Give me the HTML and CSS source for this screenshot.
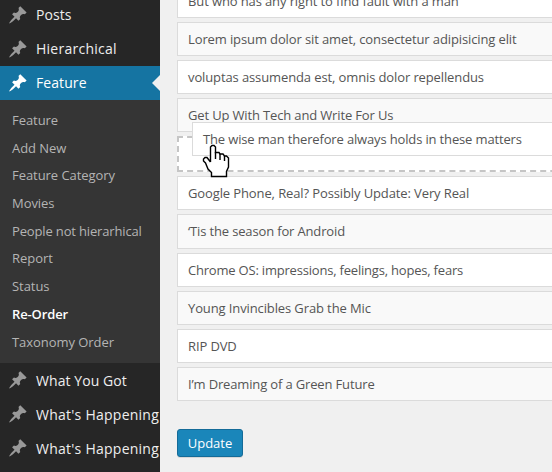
FILE: index.html
```html
<!DOCTYPE html>
<html lang="en">
<head>
<meta charset="utf-8">
<title>Re-Order</title>
<link rel="stylesheet" href="styles.css">
</head>
<body>
<svg class="defs" width="0" height="0">
  <symbol id="pin" viewBox="0 0 20 20"><path d="M10.44 3.02l1.82-1.82 6.36 6.35-1.83 1.82c-1.05-.68-2.48-.57-3.41.36l-.75.75c-.92.93-1.04 2.35-.35 3.41l-1.83 1.82-2.41-2.41-2.8 2.79c-.42.42-3.38 2.71-3.8 2.29s1.86-3.39 2.28-3.81l2.79-2.79L4.1 9.36l1.83-1.82c1.05.69 2.48.57 3.4-.36l.75-.75c.93-.92 1.05-2.35.36-3.41z"/></symbol>
</svg>
<div class="app">
  <nav class="menu">
    <a class="item"><svg class="icon"><use href="#pin"/></svg><span>Posts</span></a>
    <a class="item wide"><svg class="icon"><use href="#pin"/></svg><span>Hierarchical</span></a>
    <a class="item current"><svg class="icon"><use href="#pin"/></svg><span>Feature</span></a>
    <div class="submenu">
      <a>Feature</a>
      <a>Add New</a>
      <a>Feature Category</a>
      <a>Movies</a>
      <a class="snug">People not hierarhical</a>
      <a>Report</a>
      <a>Status</a>
      <a class="active">Re-Order</a>
      <a>Taxonomy Order</a>
    </div>
    <a class="item low"><svg class="icon"><use href="#pin"/></svg><span>What You Got</span></a>
    <a class="item low wide"><svg class="icon"><use href="#pin"/></svg><span>What's Happening</span></a>
    <a class="item low wide"><svg class="icon"><use href="#pin"/></svg><span>What's Happening</span></a>
  </nav>
  <main class="content">
    <div class="list">
      <div class="row">But who has any right to find fault with a man</div>
      <div class="row alt">Lorem ipsum dolor sit amet, consectetur adipisicing elit</div>
      <div class="row">voluptas assumenda est, omnis dolor repellendus</div>
      <div class="row alt snug">Get Up With Tech and Write For Us</div>
      <div class="slot">
        <div class="row dragged snug">The wise man therefore always holds in these matters</div>
        <svg class="cursor" width="28" height="34" viewBox="0 0 28 34">
          <path d="M8.500 18V3L10 1.500h2L13.500 3v5.500H17l1 1.500h3l1.500 2h2l2 2v9l-2 4.500v5H9.500v-4L6 25l-2.500-6L1.500 17v-2L3 13.500h2L8.500 18"/>
          <path d="M13.500 8v7M18 10v6M22.500 12v5"/>
        </svg>
      </div>
      <div class="row">Google Phone, Real? Possibly Update: Very Real</div>
      <div class="row alt tall snug">‘Tis the season for Android</div>
      <div class="row tight">Chrome OS: impressions, feelings, hopes, fears</div>
      <div class="row alt">Young Invincibles Grab the Mic</div>
      <div class="row">RIP DVD</div>
      <div class="row alt snug">I’m Dreaming of a Green Future</div>
    </div>
    <button class="update">Update</button>
  </main>
</div>
</body>
</html>
```
FILE: styles.css
```css
* { box-sizing: border-box; }
body {
  margin: 0;
  background: #f0f0f0;
  font: 13px/18px "Open Sans", sans-serif;
}
.defs { position: absolute; }
.app {
  display: flex;
  height: 472px;
  overflow: hidden;
}
.menu {
  flex: 0 0 160px;
  height: 474px;
  margin-top: -2px;
  overflow: hidden;
  background: #262626;
}
.item {
  display: flex;
  align-items: center;
  height: 34px;
  padding-left: 8px;
  gap: 8px;
  color: #eee;
  font-size: 14px;
  letter-spacing: .08px;
  white-space: nowrap;
}
.item.wide { letter-spacing: .25px; }
.low span { padding-top: 2px; }
.icon {
  flex: none;
  width: 20px;
  height: 20px;
  fill: #999;
}
.current {
  position: relative;
  background: #1574a2;
  color: #fff;
}
.current .icon { fill: #fff; }
.current::after {
  content: "";
  position: absolute;
  right: 0;
  top: 9px;
  border: 8px solid transparent;
  border-left: 0;
  border-right-color: #f0f0f0;
}
.submenu {
  height: 263px;
  padding: 7px 12px 0;
  background: #353535;
}
.submenu a {
  display: block;
  height: 27.700px;
  line-height: 27.700px;
  color: #b4b4b4;
  letter-spacing: -.05px;
  white-space: nowrap;
}
.submenu .active {
  color: #fff;
  font-weight: 600;
  letter-spacing: -.12px;
}
.content {
  flex: 1;
  min-width: 0;
  margin-top: -16px;
  padding-left: 17px;
}
.list {
  display: flex;
  flex-direction: column;
  gap: 4px;
  width: 460px;
}
.row {
  flex: none;
  height: 34px;
  padding: 0 10px;
  border: 1px solid #dbdbdb;
  background: #fff;
  color: #555;
  line-height: 33px;
  letter-spacing: -.115px;
  white-space: nowrap;
}
.row.snug, .submenu .snug { letter-spacing: -.15px; }
.row.tight { letter-spacing: -.2px; }
.alt { background: #f9f9f9; }
.tall { height: 35px; }
.slot {
  position: relative;
  height: 36px;
  border: 2px dashed #c5c5c5;
  background: #fff;
}
.dragged {
  position: absolute;
  left: 13px;
  top: -16px;
  width: 460px;
}
.cursor {
  position: absolute;
  left: 23px;
  top: 6px;
  fill: #fff;
  stroke: #000;
  stroke-width: 1.400;
}
.update {
  display: block;
  width: 66px;
  height: 28px;
  margin-top: 28px;
  padding: 0;
  border: 1px solid #146b98;
  border-radius: 3px;
  background: #1a86ba;
  box-shadow: 0 1px 0 rgba(0, 0, 0, .1);
  color: #fff;
  font: 13px/26px "Open Sans", sans-serif;
}
```
